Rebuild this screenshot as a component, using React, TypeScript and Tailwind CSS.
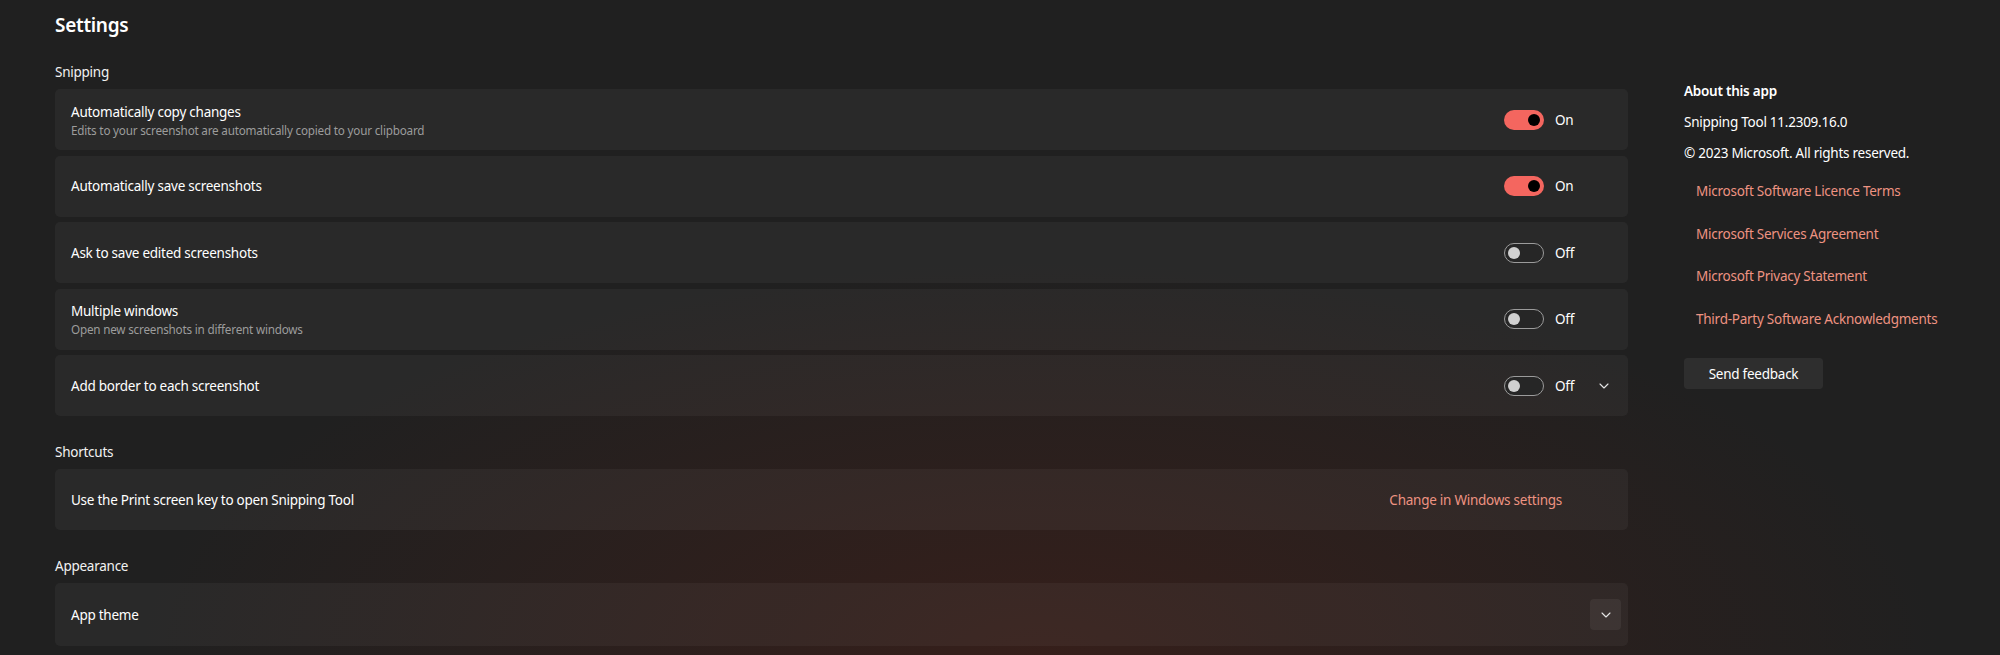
import { ReactNode } from "react";

const FONT = "font-['Segoe_UI','Noto_Sans',sans-serif]";
const BODY = "text-[13.5px] leading-[20px] tracking-[-0.25px]";

function Chevron() {
  return (
    <svg width="10" height="6" viewBox="0 0 10 6" fill="none" className="text-[#e6e6e6]">
      <path d="M1 1l4 4 4-4" stroke="currentColor" strokeWidth="1.1" strokeLinecap="round" strokeLinejoin="round" />
    </svg>
  );
}

function Toggle({ on }: { on: boolean }) {
  if (on) {
    return (
      <div className="w-[40px] h-[20px] rounded-full bg-[#f4665f] flex items-center justify-end pr-[4px]">
        <div className="w-[12px] h-[12px] rounded-full bg-black" />
      </div>
    );
  }
  return (
    <div className="w-[40px] h-[20px] rounded-full border border-[#9b9b9b] bg-[#262626] flex items-center pl-[3px]">
      <div className="w-[12px] h-[12px] rounded-full bg-[#d0d0d0]" />
    </div>
  );
}

function Card({ children, className = "" }: { children: ReactNode; className?: string }) {
  return (
    <div className={`rounded-[5px] bg-white/[0.043] flex items-center pl-[16px] ${className}`}>
      {children}
    </div>
  );
}

function ToggleRow({ title, sub, on, chevron }: { title: string; sub?: string; on: boolean; chevron?: boolean }) {
  return (
    <Card className="h-[61px] pr-[8px]">
      <div className="flex-1 flex flex-col">
        <div className={`${BODY} text-white`}>{title}</div>
        {sub && <div className="text-[11.7px] leading-[16px] tracking-[-0.2px] text-[#9c9c9c]">{sub}</div>}
      </div>
      <Toggle on={on} />
      <div className={`w-[33px] ml-[11px] ${BODY} text-white`}>{on ? "On" : "Off"}</div>
      <div className="w-[32px] flex items-center justify-center">{chevron && <Chevron />}</div>
    </Card>
  );
}

function SectionLabel({ children }: { children: ReactNode }) {
  return <div className={`${BODY} text-[#f2f2f2] mb-[7px]`}>{children}</div>;
}

const LINKS = [
  "Microsoft Software Licence Terms",
  "Microsoft Services Agreement",
  "Microsoft Privacy Statement",
  "Third-Party Software Acknowledgments",
];

export default function App() {
  return (
    <div
      className={`${FONT} w-full h-[655px] overflow-hidden bg-[#202020] bg-[radial-gradient(ellipse_45%_60%_at_52%_100%,rgba(72,30,22,0.55),transparent)] flex`}
    >
      <div className="w-[1573px] ml-[55px] shrink-0">
        <div className="pt-[11px] text-[19px] leading-[28px] tracking-[-0.3px] font-semibold text-white">Settings</div>

        <div className="mt-[23px]">
          <SectionLabel>Snipping</SectionLabel>
          <div className="flex flex-col gap-[5.5px]">
            <ToggleRow
              title="Automatically copy changes"
              sub="Edits to your screenshot are automatically copied to your clipboard"
              on
            />
            <ToggleRow title="Automatically save screenshots" on />
            <ToggleRow title="Ask to save edited screenshots" on={false} />
            <ToggleRow title="Multiple windows" sub="Open new screenshots in different windows" on={false} />
            <ToggleRow title="Add border to each screenshot" on={false} chevron />
          </div>
        </div>

        <div className="mt-[26px]">
          <SectionLabel>Shortcuts</SectionLabel>
          <Card className="h-[61px] pr-[66px]">
            <div className={`flex-1 ${BODY} text-white`}>
              Use the Print screen key to open Snipping Tool
            </div>
            <div className={`${BODY} text-[#ee9382]`}>Change in Windows settings</div>
          </Card>
        </div>

        <div className="mt-[26px]">
          <SectionLabel>Appearance</SectionLabel>
          <Card className="h-[63px] pr-[7px]">
            <div className={`flex-1 ${BODY} text-white`}>App theme</div>
            <div className="w-[31px] h-[31px] rounded-[4px] bg-white/[0.06] flex items-center justify-center">
              <Chevron />
            </div>
          </Card>
        </div>
      </div>

      <div className="ml-[56px] pt-[81px] flex flex-col">
        <div className={`${BODY} font-semibold text-white`}>About this app</div>
        <div className={`mt-[11px] ${BODY} text-white`}>Snipping Tool 11.2309.16.0</div>
        <div className={`mt-[11px] ${BODY} text-white`}>© 2023 Microsoft. All rights reserved.</div>
        <div className="mt-[7px] flex flex-col">
          {LINKS.map((l) => (
            <div key={l} className={`h-[42.5px] flex items-center pl-[12px] ${BODY} text-[#ee9382]`}>
              {l}
            </div>
          ))}
        </div>
        <div className={`mt-[18px] w-[139px] h-[31px] rounded-[4px] bg-white/[0.065] flex items-center justify-center ${BODY} text-white`}>
          Send feedback
        </div>
      </div>
    </div>
  );
}
